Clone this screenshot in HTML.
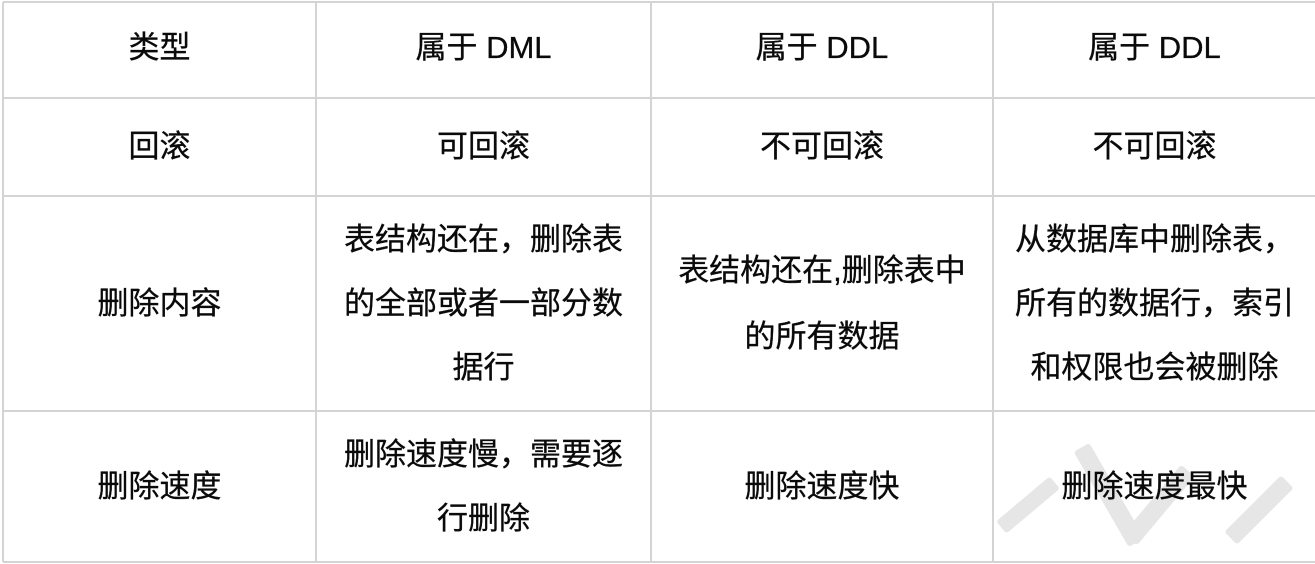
<!DOCTYPE html>
<html><head><meta charset="utf-8"><style>
html,body{margin:0;padding:0;background:#fff;width:1315px;height:564px;overflow:hidden;position:relative}
.wrap{position:absolute;left:0;top:0;width:1315px;height:564px;overflow:hidden}
.h{position:absolute;height:2px;background:#d4d4d4;left:3px;right:0}
.v{position:absolute;width:2px;background:#d4d4d4;top:2px;height:560px}
.c{position:absolute;display:flex;align-items:center;justify-content:center;text-align:center;white-space:nowrap;
font-family:"Liberation Sans","Noto Sans CJK SC",sans-serif;font-size:31px;color:#0a0a0a;line-height:64px;-webkit-text-stroke:0.3px #0a0a0a}
.wm{position:absolute;background:#e6e6e6;border-radius:3px}
</style></head><body><div class="wrap">
<div class="wm" style="left:1100px;top:440px;width:18px;height:110px;transform:rotate(-30deg)"></div>
<div class="wm" style="left:1150px;top:460px;width:18px;height:90px;transform:rotate(40deg)"></div>
<div class="wm" style="left:1250px;top:470px;width:18px;height:80px;transform:rotate(45deg)"></div>
<div class="wm" style="left:1020px;top:470px;width:16px;height:70px;transform:rotate(50deg)"></div>
<div class="h" style="top:1px"></div>
<div class="h" style="top:97px"></div>
<div class="h" style="top:195px"></div>
<div class="h" style="top:410px"></div>
<div class="h" style="top:561px"></div>
<div class="v" style="left:2px"></div>
<div class="v" style="left:315px"></div>
<div class="v" style="left:650px"></div>
<div class="v" style="left:992px"></div>

<div class="c" style="left:3px;width:313px;top:0;height:96px">类型</div>
<div class="c" style="left:317px;width:333px;top:0;height:96px">属于 DML</div>
<div class="c" style="left:652px;width:340px;top:0;height:96px">属于 DDL</div>
<div class="c" style="left:994px;width:321px;top:0;height:96px">属于 DDL</div>

<div class="c" style="left:3px;width:313px;top:99px;height:96px">回滚</div>
<div class="c" style="left:317px;width:333px;top:99px;height:96px">可回滚</div>
<div class="c" style="left:652px;width:340px;top:99px;height:96px">不可回滚</div>
<div class="c" style="left:994px;width:321px;top:99px;height:96px">不可回滚</div>

<div class="c" style="left:3px;width:313px;top:197px;height:213px">删除内容</div>
<div class="c" style="left:317px;width:333px;top:197px;height:213px">表结构还在，删除表<br>的全部或者一部分数<br>据行</div>
<div class="c" style="left:652px;width:340px;top:197px;height:213px;line-height:66px">表结构还在,删除表中<br>的所有数据</div>
<div class="c" style="left:994px;width:321px;top:197px;height:213px">从数据库中删除表，<br>所有的数据行，索引<br>和权限也会被删除</div>

<div class="c" style="left:3px;width:313px;top:412px;height:149px">删除速度</div>
<div class="c" style="left:317px;width:333px;top:412px;height:149px">删除速度慢，需要逐<br>行删除</div>
<div class="c" style="left:652px;width:340px;top:412px;height:149px">删除速度快</div>
<div class="c" style="left:994px;width:321px;top:412px;height:149px">删除速度最快</div>
</div></body></html>
